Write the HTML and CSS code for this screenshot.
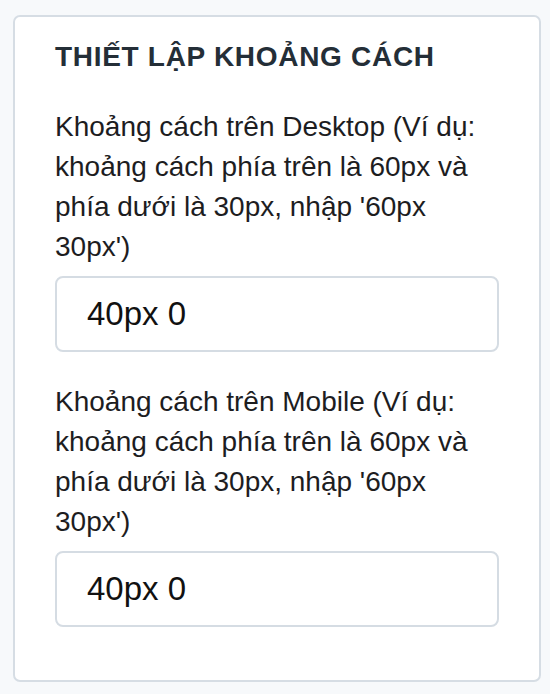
FILE: index.html
```html
<!DOCTYPE html>
<html lang="vi">
<head>
<meta charset="utf-8">
<title>Thiết lập khoảng cách</title>
<link rel="stylesheet" href="styles.css">
</head>
<body>
  <section class="card">
    <h2 class="card-title">Thiết lập khoảng cách</h2>
    <div class="form-group">
      <label class="form-label" for="pad-desktop">Khoảng cách trên Desktop (Ví dụ: khoảng cách phía trên là 60px và phía dưới là 30px, nhập '60px 30px')</label>
      <input class="form-input" id="pad-desktop" type="text" value="40px 0">
    </div>
    <div class="form-group">
      <label class="form-label" for="pad-mobile">Khoảng cách trên Mobile (Ví dụ: khoảng cách phía trên là 60px và phía dưới là 30px, nhập '60px 30px')</label>
      <input class="form-input" id="pad-mobile" type="text" value="40px 0">
    </div>
  </section>
</body>
</html>
```
FILE: styles.css
```css
html, body {
  margin: 0;
  padding: 0;
}

body {
  background: #f7f9fb;
  font-family: "Liberation Sans", Arial, sans-serif;
  padding: 15px 9px 0 13px;
  height: 694px;
  box-sizing: border-box;
}

.card {
  background: #ffffff;
  border: 2px solid #d6dde4;
  border-radius: 7px;
  padding: 20px 40px 53px 40px;
  display: flex;
  flex-direction: column;
  gap: 30px;
}

.card-title {
  margin: 0;
  font-size: 28px;
  line-height: 40px;
  font-weight: 700;
  text-transform: uppercase;
  letter-spacing: 0.7px;
  color: #242e37;
}

.form-group {
  display: flex;
  flex-direction: column;
  gap: 9px;
}

.form-label {
  font-size: 28px;
  line-height: 40px;
  letter-spacing: 0;
  color: #1d1d1f;
}

.form-input {
  box-sizing: border-box;
  height: 76px;
  width: 100%;
  margin: 0;
  padding: 0 30px;
  border: 2px solid #d5dce3;
  border-radius: 8px;
  background: #ffffff;
  font-family: "Liberation Sans", Arial, sans-serif;
  font-size: 33px;
  color: #111111;
  outline: none;
}
```
